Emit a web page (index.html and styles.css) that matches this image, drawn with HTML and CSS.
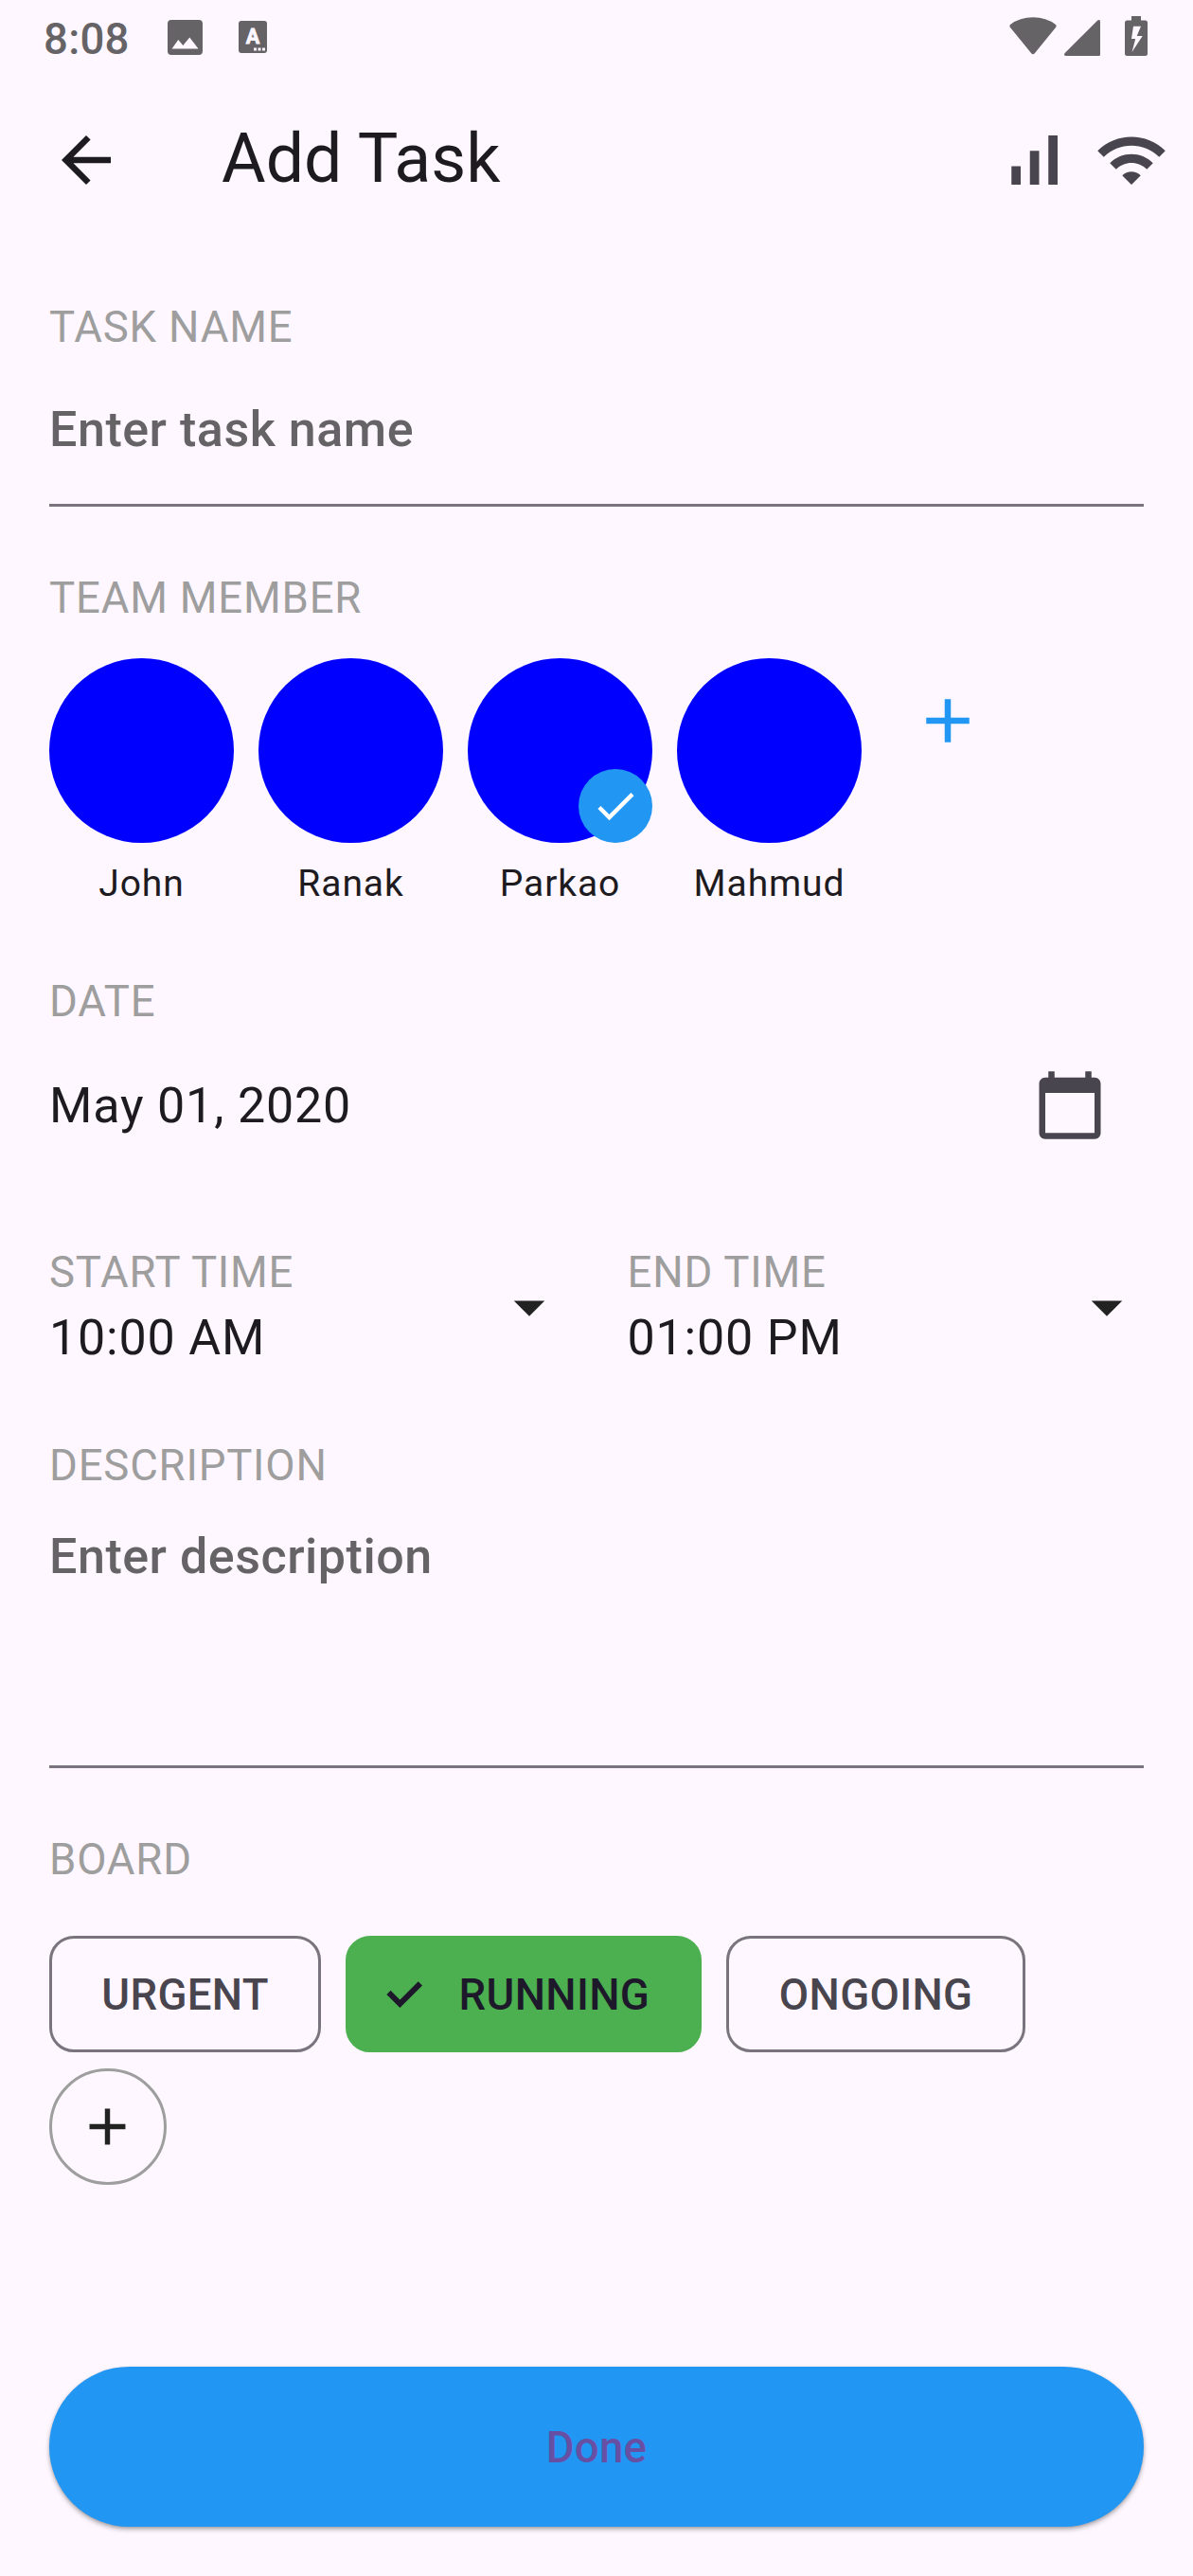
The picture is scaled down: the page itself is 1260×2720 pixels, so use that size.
FILE: index.html
```html
<!DOCTYPE html>
<html lang="en">
<head>
<meta charset="utf-8">
<title>Add Task</title>
<link rel="stylesheet" href="styles.css">
</head>
<body>
<div class="screen">
  <div class="status-bar">
    <span class="clock">8:08</span>
    <svg class="st-image" viewBox="0 0 37 37"><path fill-rule="evenodd" d="M4 0h29a4 4 0 0 1 4 4v29a4 4 0 0 1-4 4H4a4 4 0 0 1-4-4V4a4 4 0 0 1 4-4zM4.500 30.500h28L23.300 18.500l-7 8.500-5-6z"/></svg>
    <svg class="st-lang" viewBox="0 0 30 34"><rect width="30" height="34" rx="3"/><text x="15" y="24" text-anchor="middle">A</text><path class="dots" d="M16 28.500h3v3h-3zM20.500 28.500h3v3h-3zM25 28.500h3v3h-3z"/></svg>
    <span class="spacer"></span>
    <svg class="st-wifi" viewBox="0 0 50 40"><path d="M1 8Q11 .3 25 .3T49 8Q50.300 9.300 49 11L27 38Q25 40.500 23 38L1 11Q-.3 9.300 1 8z"/></svg>
    <svg class="st-cell" viewBox="0 0 38 38"><path d="M35 .7Q38-1.200 38 2v34.500Q38 38 36.500 38H2Q-1.200 38 .7 35z"/></svg>
    <svg class="st-battery" viewBox="0 0 24 42"><path fill-rule="evenodd" d="M7 0h10v4.500h4.500Q24 4.500 24 7v32.500q0 2.500-2.500 2.500h-19Q0 42 0 39.500V7q0-2.500 2.500-2.500H7zM9 10.700 7 24h4.200L7.500 38 18.700 21h-6L17 10.700z"/></svg>
  </div>

  <header class="app-bar">
    <svg class="icon" viewBox="0 0 24 24"><path d="M20 11H7.830l5.590-5.590L12 4l-8 8 8 8 1.410-1.410L7.830 13H20v-2z"/></svg>
    <h1 class="title">Add Task</h1>
    <svg class="icon muted" viewBox="0 0 24 24"><path d="M17 4h3v16h-3zM5 14h3v6H5zM11 9h3v11h-3z"/></svg>
    <svg class="icon muted" viewBox="0 0 24 24"><path d="M1 9l2 2c4.970-4.970 13.030-4.970 18 0l2-2C16.930 2.930 7.080 2.930 1 9zm8 8l3 3 3-3c-1.650-1.660-4.340-1.660-6 0zm-4-4l2 2c2.760-2.760 7.240-2.760 10 0l2-2C15.140 9.140 8.870 9.140 5 13z"/></svg>
  </header>

  <main class="form">
    <section class="field">
      <div class="label">TASK NAME</div>
      <div class="input input-name">Enter task name</div>
    </section>

    <section class="field team">
      <div class="label">TEAM MEMBER</div>
      <div class="members">
        <div class="member"><div class="avatar"></div><span>John</span></div>
        <div class="member"><div class="avatar"></div><span>Ranak</span></div>
        <div class="member">
          <div class="avatar"><div class="badge"><svg viewBox="0 0 24 24"><path d="M9 16.170 4.830 12l-1.420 1.410L9 19 21 7l-1.410-1.410z"/></svg></div></div>
          <span>Parkao</span>
        </div>
        <div class="member"><div class="avatar"></div><span>Mahmud</span></div>
        <svg class="icon add-member" viewBox="0 0 24 24"><path d="M19 13h-6v6h-2v-6H5v-2h6V5h2v6h6z"/></svg>
      </div>
    </section>

    <section class="field date">
      <div class="label">DATE</div>
      <div class="date-row">
        <span class="value">May 01, 2020</span>
        <svg class="icon muted" viewBox="0 0 24 24"><path d="M20 3h-1V1h-2v2H7V1H5v2H4c-1.100 0-2 .9-2 2v16c0 1.100.9 2 2 2h16c1.100 0 2-.9 2-2V5c0-1.100-.9-2-2-2zm0 18H4V8h16v13z"/></svg>
      </div>
    </section>

    <section class="times">
      <div class="time">
        <div><div class="label">START TIME</div><div class="value">10:00 AM</div></div>
        <svg class="icon dark" viewBox="0 0 24 24"><path d="m7 10 5 5 5-5z"/></svg>
      </div>
      <div class="time">
        <div><div class="label">END TIME</div><div class="value">01:00 PM</div></div>
        <svg class="icon dark" viewBox="0 0 24 24"><path d="m7 10 5 5 5-5z"/></svg>
      </div>
    </section>

    <section class="field description">
      <div class="label">DESCRIPTION</div>
      <div class="input input-description">Enter description</div>
    </section>

    <section class="field board">
      <div class="label">BOARD</div>
      <div class="chips">
        <div class="chip">URGENT</div>
        <div class="chip selected"><svg viewBox="0 0 39 28"><path d="M2.500 11.900 14.400 23.800 35.900 2.400"/></svg>RUNNING</div>
        <div class="chip">ONGOING</div>
        <div class="add-board"><svg viewBox="0 0 24 24"><path d="M19 13h-6v6h-2v-6H5v-2h6V5h2v6h6z"/></svg></div>
      </div>
    </section>
  </main>

  <button class="done">Done</button>
</div>
</body>
</html>
```
FILE: styles.css
```css
* {
  box-sizing: border-box;
}

body {
  margin: 0;
  background: #fef7ff;
  color: #1d1b20;
  font-family: Roboto, "Liberation Sans", sans-serif;
}

svg {
  display: block;
  flex: none;
}

.screen {
  display: flex;
  flex-direction: column;
  width: 1260px;
  height: 2720px;
  padding-bottom: 52px;
}

/* Status bar */
.status-bar {
  display: flex;
  align-items: flex-start;
  height: 78px;
  padding: 0 48px 0 46px;
  color: #666367;
  fill: #666367;
}

.clock {
  width: 130.5px;
  font-size: 45.5px;
  font-weight: 500;
  letter-spacing: 0.3px;
  line-height: 84px;
}

.spacer {
  flex: 1;
}

.st-image {
  width: 37px;
  height: 37px;
  margin-top: 20.5px;
}

.st-lang {
  width: 30px;
  height: 34px;
  margin: 22px 0 0 38.5px;
}

.st-lang text {
  fill: #fef7ff;
  stroke: #fef7ff;
  stroke-width: 0.8px;
  font-size: 21.5px;
  font-weight: 700;
}

.st-lang .dots {
  fill: #fef7ff;
}

.st-wifi {
  width: 50px;
  height: 40px;
  margin: 18px 8.5px 0 0;
}

.st-cell {
  width: 38px;
  height: 38px;
  margin: 21px 26px 0 0;
}

.st-battery {
  width: 24px;
  height: 42px;
  margin-top: 17px;
}

/* App bar */
.app-bar {
  display: flex;
  align-items: center;
  gap: 26px;
  height: 182px;
  padding: 0 26px 0 52px;
}

.icon {
  width: 78px;
  height: 78px;
  fill: #1d1b20;
}

.icon.muted {
  fill: #49454f;
}

.icon.dark {
  fill: #222;
}

.title {
  flex: 1;
  margin: 0 0 3px 78px;
  font-size: 71.5px;
  font-weight: 400;
  line-height: 91px;
}

/* Form */
.form {
  flex: 1;
  padding: 53px 52px 0;
}

.label {
  color: #9e9e9e;
  font-size: 45.5px;
  letter-spacing: 0.8125px;
  line-height: 65px;
}

.input {
  border-bottom: 3.25px solid #79747e;
  color: #666367;
  font-size: 52px;
  font-weight: 500;
  letter-spacing: 0.53px;
  line-height: 78px;
}

.input-name {
  height: 156.6px;
  padding-top: 37px;
}

.value {
  font-size: 52px;
  letter-spacing: 0.8125px;
  line-height: 74px;
}

.team {
  margin-top: 64.4px;
}

.members {
  display: flex;
  gap: 26px;
  margin-top: 31px;
}

.member {
  display: flex;
  flex-direction: column;
  align-items: center;
  gap: 17.4px;
  width: 195px;
  font-size: 39px;
  letter-spacing: 0.9px;
  line-height: 52px;
}

.avatar {
  position: relative;
  width: 195px;
  height: 195px;
  border-radius: 50%;
  background: #00f;
}

.badge {
  position: absolute;
  right: 0;
  bottom: -0.5px;
  display: grid;
  place-items: center;
  width: 78px;
  height: 78px;
  border-radius: 50%;
  background: #2196f3;
}

.badge svg {
  width: 52px;
  height: 52px;
  fill: #fff;
}

.icon.add-member {
  margin: 27px 0 0 26px;
  fill: #2196f3;
}

.date {
  margin-top: 65.6px;
}

.date-row {
  display: flex;
  align-items: center;
  justify-content: space-between;
  height: 153.5px;
  padding-right: 39px;
}

.date-row .value {
  padding-top: 2px;
}

.times {
  display: grid;
  grid-template-columns: 1fr 1fr;
  gap: 65px;
  margin-top: 67.5px;
}

.time {
  display: flex;
  align-items: center;
  justify-content: space-between;
}

.description {
  margin-top: 65px;
}

.input-description {
  height: 287px;
  padding-top: 25px;
}

.board {
  margin-top: 64px;
}

.chips {
  display: flex;
  flex-wrap: wrap;
  gap: 16.25px 26px;
  margin-top: 48px;
}

.chip {
  display: flex;
  align-items: center;
  height: 123.5px;
  padding: 2px 52.3px 0;
  border: 3.25px solid #79747e;
  border-radius: 26px;
  color: #49454f;
  font-size: 45.5px;
  font-weight: 500;
  letter-spacing: 0.36px;
  line-height: 65px;
}

.chip.selected {
  gap: 38px;
  padding-left: 39.3px;
  border-color: #4caf50;
  background: #4caf50;
  color: #1d192b;
}

.chip svg {
  width: 39px;
  height: 28px;
  margin-bottom: 1px;
  fill: none;
  stroke: #1d192b;
  stroke-width: 6px;
}

.add-board {
  display: grid;
  place-items: center;
  width: 123.5px;
  height: 123.5px;
  border: 3.25px solid #9e9e9e;
  border-radius: 50%;
}

.add-board svg {
  width: 65px;
  height: 65px;
  fill: #222;
}

.done {
  height: 169px;
  margin: 0 52px;
  padding: 2px 0 0;
  border: 0;
  border-radius: 84.5px;
  background: #2196f3;
  box-shadow: 0 3px 5px rgba(0, 0, 0, 0.28), 0 1px 3px rgba(0, 0, 0, 0.12);
  color: #6750a4;
  font: 500 45.5px/65px Roboto, "Liberation Sans", sans-serif;
  letter-spacing: 0.325px;
}
```
